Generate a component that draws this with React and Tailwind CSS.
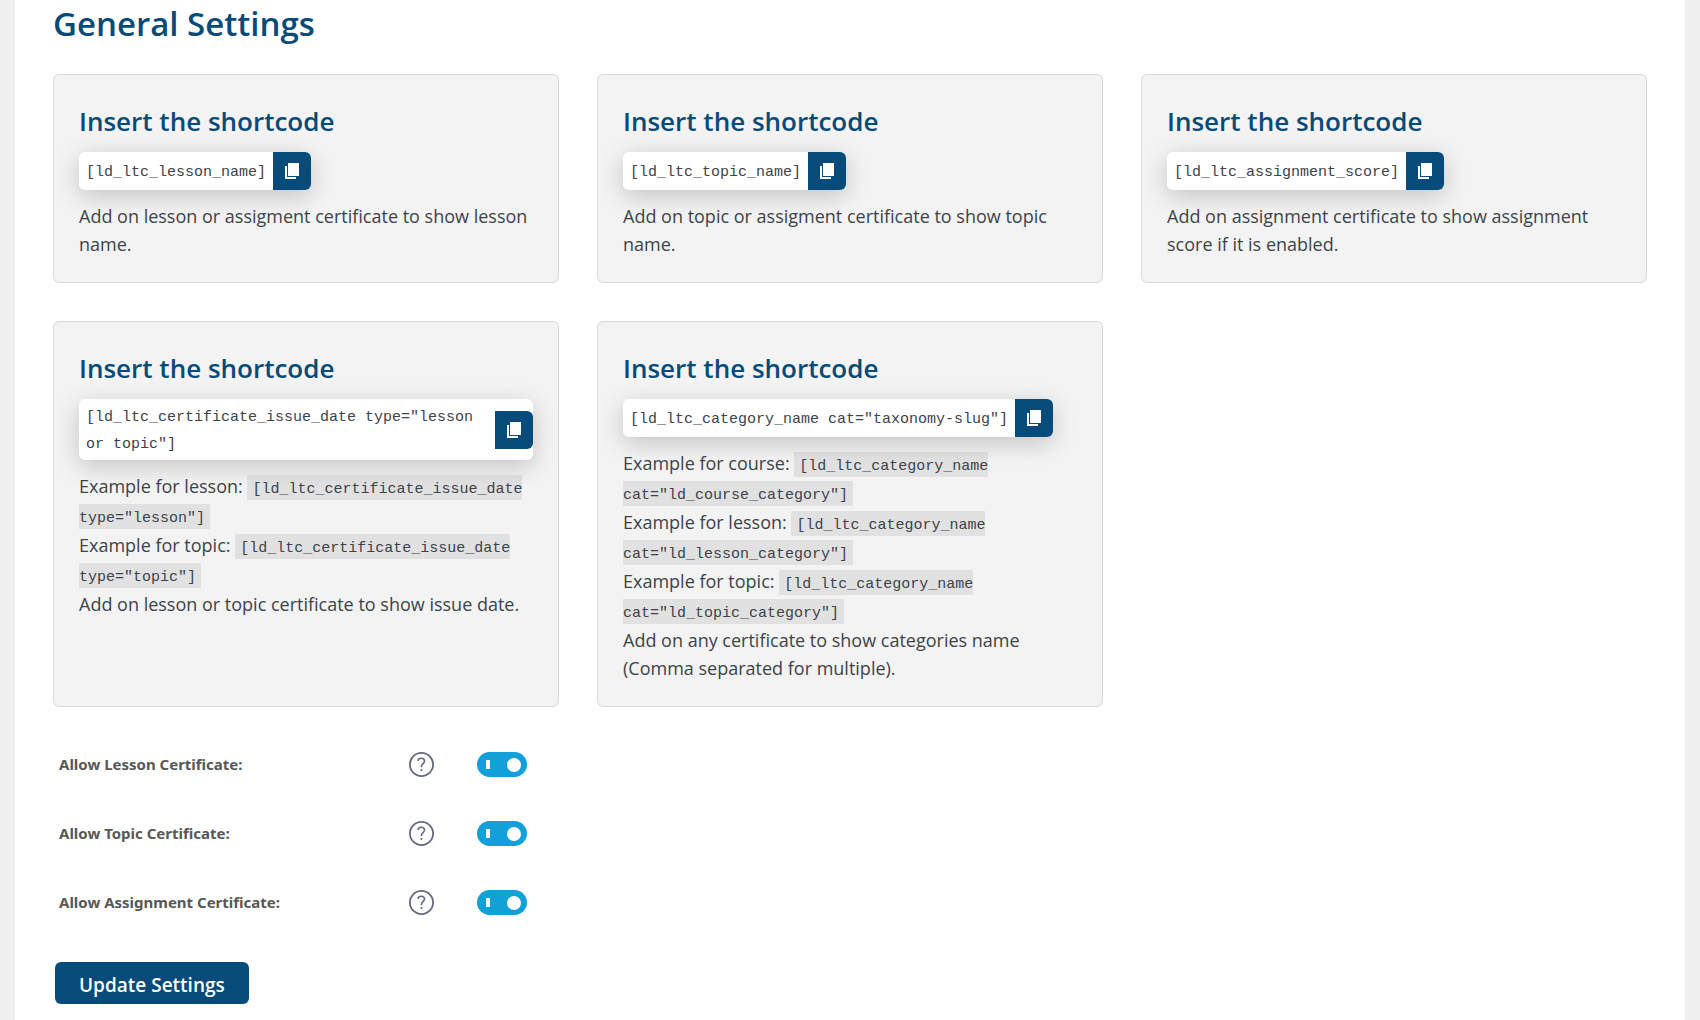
import React, { useState } from "react";
import clsx from "clsx";

const SHORTCODES = [
  {
    code: "[ld_ltc_lesson_name]",
    description: "Add on lesson or assigment certificate to show lesson name.",
  },
  {
    code: "[ld_ltc_topic_name]",
    description: "Add on topic or assigment certificate to show topic name.",
  },
  {
    code: "[ld_ltc_assignment_score]",
    description: "Add on assignment certificate to show assignment score if it is enabled.",
  },
  {
    code: '[ld_ltc_certificate_issue_date type="lesson or topic"]',
    examples: [
      { label: "Example for lesson:", code: '[ld_ltc_certificate_issue_date type="lesson"]' },
      { label: "Example for topic:", code: '[ld_ltc_certificate_issue_date type="topic"]' },
    ],
    description: "Add on lesson or topic certificate to show issue date.",
  },
  {
    code: '[ld_ltc_category_name cat="taxonomy-slug"]',
    examples: [
      { label: "Example for course:", code: '[ld_ltc_category_name cat="ld_course_category"]' },
      { label: "Example for lesson:", code: '[ld_ltc_category_name cat="ld_lesson_category"]' },
      { label: "Example for topic:", code: '[ld_ltc_category_name cat="ld_topic_category"]' },
    ],
    description: "Add on any certificate to show categories name (Comma separated for multiple).",
  },
];

const OPTIONS = [
  { id: "lesson", label: "Allow Lesson Certificate:" },
  { id: "topic", label: "Allow Topic Certificate:" },
  { id: "assignment", label: "Allow Assignment Certificate:" },
];

const MONO = "font-['Liberation_Mono',monospace] text-[15px] text-[#3c434a]";

function CopyIcon() {
  return (
    <svg width="14" height="16" viewBox="0 0 14 16" fill="#fff" aria-hidden="true">
      <path d="M3 0h11v13H3z" />
      <path d="M0 3h2v11h9v2H0z" />
    </svg>
  );
}

function HelpIcon() {
  return (
    <svg width="25" height="25" viewBox="0 0 25 25" fill="none" stroke="#646982" aria-hidden="true">
      <circle cx="12.5" cy="12.5" r="11.6" strokeWidth="1.8" />
      <path d="M8.9 8.8c.3-1.6 1.5-2.5 3.3-2.5 2 0 3.3 1.1 3.3 2.8 0 2.5-3.1 2.7-3.1 5.5v.6" strokeWidth="1.6" />
      <circle cx="12.4" cy="18" r="1.1" fill="#646982" stroke="none" />
    </svg>
  );
}

function ShortcodeCard({ code, examples = [], description }) {
  return (
    <section className="rounded-md border border-[#dadada] bg-[#f3f3f3] px-[25px] pt-[25px] pb-6">
      <h2 className="mb-[10px] text-[26px] leading-[42px] font-semibold text-[#064b79]">Insert the shortcode</h2>
      <div className="flex w-fit max-w-full items-center rounded-md bg-white shadow-[0_6px_25px_rgba(0,0,0,0.2)]">
        <code className={clsx(MONO, "px-[7px] pt-[5px] pb-[2px] leading-[27px]")}>{code}</code>
        <button
          type="button"
          aria-label="Copy shortcode"
          onClick={() => navigator.clipboard?.writeText(code)}
          className="flex size-[38px] shrink-0 items-center justify-center rounded-r-md bg-[#064b79]"
        >
          <CopyIcon />
        </button>
      </div>
      <div className="mt-3 text-lg leading-7 text-[#3c434a]">
        {examples.map((ex) => (
          <p key={ex.code} className="pb-px leading-[29px]">
            {ex.label}{" "}
            <code className={clsx(MONO, "bg-black/7 px-[5px] pt-[6px] pb-[2px] leading-none")}>{ex.code}</code>
          </p>
        ))}
        <p>{description}</p>
      </div>
    </section>
  );
}

function ToggleRow({ id, label, checked, onChange }) {
  return (
    <div className="flex h-[69px] items-center">
      <label htmlFor={id} className="w-[350px] font-['Noto_Sans',sans-serif] text-[15px] font-bold text-[#585858]">
        {label}
      </label>
      <button type="button" aria-label={"Help: " + label} className="mr-[43px]">
        <HelpIcon />
      </button>
      {/* The "I" mark and the knob are both pseudo elements of the checkbox */}
      <input
        id={id}
        type="checkbox"
        checked={checked}
        onChange={onChange}
        className="flex h-[25px] w-[50px] cursor-pointer appearance-none items-center justify-between rounded-full bg-gray-400 pr-[6px] pl-[9px] before:h-[9px] before:w-1 before:bg-white after:size-[14px] after:rounded-full after:bg-white checked:bg-[#11a0d7]"
      />
    </div>
  );
}

export default function App() {
  const [enabled, setEnabled] = useState({ lesson: true, topic: true, assignment: true });

  const toggle = (id) => setEnabled((prev) => ({ ...prev, [id]: !prev[id] }));

  return (
    <div className="min-h-screen bg-[#f0f0f1] px-[15px] font-['Open_Sans','Noto_Sans',sans-serif]">
      <main className="min-h-screen bg-white px-[38px] pb-4">
        <h1 className="mb-[26px] text-[33px] leading-[48px] font-semibold text-[#064b79]">General Settings</h1>

        <div className="grid grid-cols-3 gap-[38px]">
          {SHORTCODES.map((item) => (
            <ShortcodeCard key={item.code} {...item} />
          ))}
        </div>

        <form className="mt-[23px]" onSubmit={(e) => e.preventDefault()}>
          <div className="pl-[6px]">
            {OPTIONS.map((opt) => (
              <ToggleRow key={opt.id} {...opt} checked={enabled[opt.id]} onChange={() => toggle(opt.id)} />
            ))}
          </div>
          <button
            type="submit"
            className="mt-[25px] ml-[2px] h-[42px] rounded-md bg-[#064b79] px-6 pt-1 text-[19px] font-semibold text-white"
          >
            Update Settings
          </button>
        </form>
      </main>
    </div>
  );
}
